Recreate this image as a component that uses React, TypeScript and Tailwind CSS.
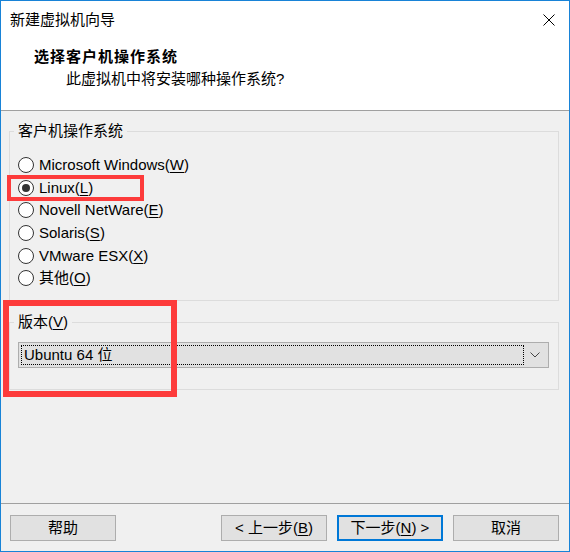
import React from "react";

const FONT = { fontFamily: '"Liberation Sans", "Noto Sans CJK SC", sans-serif' };

function U({ c }: { c: string }) {
  return <span className="underline underline-offset-[2px]">{c}</span>;
}

function Radio({ checked, children }: { checked?: boolean; children: React.ReactNode }) {
  return (
    <div className="flex h-[22.6px] items-center">
      <div className="ml-[8px] flex h-[16px] w-[16px] items-center justify-center rounded-full border border-[#333333] bg-white">
        {checked && <div className="h-[8px] w-[8px] rounded-full bg-[#333333]" />}
      </div>
      <div className="ml-[5px] leading-[20px]">{children}</div>
    </div>
  );
}

function Btn({ children, primary }: { children: React.ReactNode; primary?: boolean }) {
  return (
    <div
      className={
        "flex h-[26px] w-[106px] items-center justify-center bg-[#e1e1e1] " +
        (primary ? "border-2 border-[#0078d7]" : "border border-[#adadad]")
      }
    >
      {children}
    </div>
  );
}

export default function App() {
  return (
    <div
      className="relative flex h-[552px] w-[570px] flex-col border border-[#1883d7] bg-[#f0f0f0] text-[15px] text-black"
      style={FONT}
    >
      {/* title + header */}
      <div className="flex h-[110px] flex-col border-b border-[#a0a0a0] bg-white">
        <div className="flex h-[38px] items-center justify-between pl-[9px] pr-[14px]">
          <span className="leading-[20px]">新建虚拟机向导</span>
          <svg width="12" height="12" viewBox="0 0 12 12">
            <path d="M0.5 0.5 L11.5 11.5 M11.5 0.5 L0.5 11.5" stroke="#000" strokeWidth="1" />
          </svg>
        </div>
        <div className="pl-[33px] pt-[8px] font-bold leading-[20px] tracking-[1px]">选择客户机操作系统</div>
        <div className="pl-[65px] pt-[2px] leading-[20px]">此虚拟机中将安装哪种操作系统?</div>
      </div>

      {/* guest OS group */}
      <div className="relative ml-[8px] mr-[10px] mt-[20px] h-[170px] border border-[#dcdcdc]">
        <div className="absolute -top-[11px] left-[4px] bg-[#f0f0f0] px-[4px] leading-[20px]">客户机操作系统</div>
        <div className="pt-[22px]">
          <Radio>
            Microsoft Windows(<U c="W" />)
          </Radio>
          <Radio checked>
            Linux(<U c="L" />)
          </Radio>
          <Radio>
            Novell NetWare(<U c="E" />)
          </Radio>
          <Radio>
            Solaris(<U c="S" />)
          </Radio>
          <Radio>
            VMware ESX(<U c="X" />)
          </Radio>
          <Radio>
            其他(<U c="O" />)
          </Radio>
        </div>
      </div>

      {/* version group */}
      <div className="relative ml-[8px] mr-[10px] mt-[21px] h-[68px] border border-[#dcdcdc]">
        <div className="absolute -top-[11px] left-[4px] bg-[#f0f0f0] px-[4px] leading-[20px]">
          版本(<U c="V" />)
        </div>
        <div className="pl-[8px] pt-[19px]">
          <div className="flex h-[26px] w-[531px] items-center border border-[#adadad] bg-[#e1e1e1]">
            <div className="ml-[2px] flex h-[20px] w-[503px] items-center border border-dotted border-[#000] pl-[2px]">
              <span className="leading-[20px]">Ubuntu 64 位</span>
            </div>
            <div className="flex flex-1 items-center justify-center pr-[2px]">
              <svg width="10" height="6" viewBox="0 0 10 6">
                <path d="M0.5 0.5 L5 5 L9.5 0.5" stroke="#444" strokeWidth="1" fill="none" />
              </svg>
            </div>
          </div>
        </div>
      </div>

      <div className="flex-1" />

      {/* footer */}
      <div className="flex h-[48px] border-t border-[#a0a0a0] pt-[11px]">
        <div className="flex w-full">
          <div className="ml-[9px]">
            <Btn>帮助</Btn>
          </div>
          <div className="ml-auto mr-[10px] flex gap-[10px]">
            <Btn>
              &lt; 上一步(<U c="B" />)
            </Btn>
            <Btn primary>
              下一步(<U c="N" />) &gt;
            </Btn>
            <Btn>取消</Btn>
          </div>
        </div>
      </div>

      {/* annotations */}
      <div className="pointer-events-none absolute left-[6px] top-[174px] h-[26px] w-[137px] border-[4px] border-[#fd3b3b]" />
      <div className="pointer-events-none absolute left-[2px] top-[299px] h-[97px] w-[174px] border-[6px] border-[#fd3b3b]" />
    </div>
  );
}
